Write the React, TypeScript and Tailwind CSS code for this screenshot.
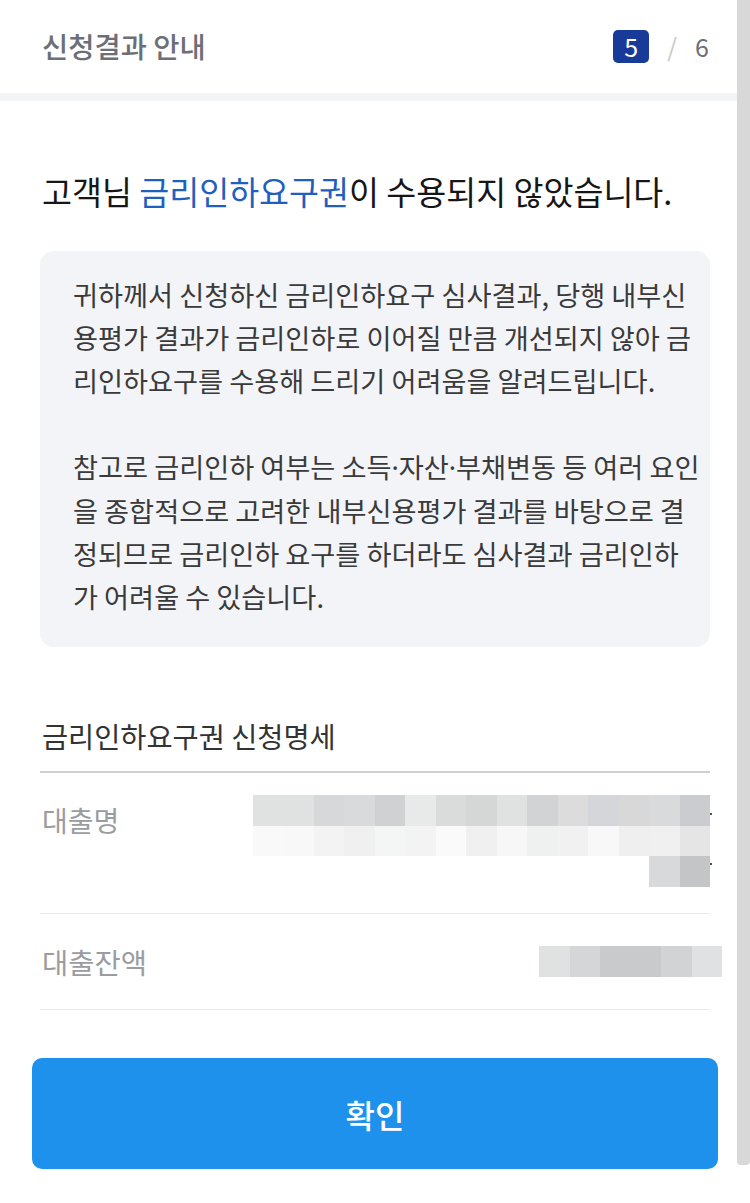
import React from 'react';

const FONT = { fontFamily: '"Noto Sans CJK KR", "Noto Sans", sans-serif' };
const LATIN = { fontFamily: '"Noto Sans", "Noto Sans CJK KR", sans-serif' };

// blurred (mosaic) values, one colour per 31px cell; null = empty cell
const loanNameCells: (string | null)[][] = [
  ['#e0e2e1', '#e0e2e1', '#d6d8da', '#d9dadc', '#d0d1d3', '#e8eae9', '#dadcdb', '#d5d7d6', '#e0e2e1', '#d2d3d5', '#dcdcdc', '#d5d6d9', '#d8d8d8', '#d9dadc', '#cbcccf'],
  ['#f9f9f9', '#f8f8f8', '#f3f3f3', '#f0f0f0', '#f4f6f5', '#f3f3f3', '#fafafa', '#f0f0f0', '#f7f7f7', '#eff1f0', '#f1f1f1', '#f8f8f8', '#efefef', '#f0f0f0', '#e5e5e5'],
  [null, null, null, null, null, null, null, null, null, null, null, null, null, '#d8d9db', '#c4c5c7'],
];

const balanceCells: (string | null)[][] = [
  ['#e0e2e1', '#d5d6d8', '#c9cacc', '#c9cacc', '#d2d3d5', '#e0e1e3'],
];

const Mosaic: React.FC<{ rows: (string | null)[][] }> = ({ rows }) => (
  <div className="flex flex-col">
    {rows.map((row, r) => (
      <div key={r} className="flex">
        {row.map((c, i) => (
          <div
            key={i}
            className="w-[30.5px] h-[30.7px]"
            style={{ backgroundColor: c ?? 'transparent' }}
          />
        ))}
      </div>
    ))}
  </div>
);

// middle dots set in a latin font so they stay narrow
const withDots = (line: string) =>
  line.split('·').map((part, i, arr) => (
    <React.Fragment key={i}>
      {part}
      {i < arr.length - 1 && <span style={LATIN}>·</span>}
    </React.Fragment>
  ));

const boxLines1 = [
  '귀하께서 신청하신 금리인하요구 심사결과, 당행 내부신',
  '용평가 결과가 금리인하로 이어질 만큼 개선되지 않아 금',
  '리인하요구를 수용해 드리기 어려움을 알려드립니다.',
];

const boxLines2 = [
  '참고로 금리인하 여부는 소득·자산·부채변동 등 여러 요인',
  '을 종합적으로 고려한 내부신용평가 결과를 바탕으로 결',
  '정되므로 금리인하 요구를 하더라도 심사결과 금리인하',
  '가 어려울 수 있습니다.',
];

export default function App() {
  return (
    <div className="w-[750px] min-h-[1203px] bg-white flex" style={FONT}>
      <div className="w-[737px] flex flex-col">
        {/* Header */}
        <div className="h-[93px] flex items-center justify-between pl-[42px] pr-[28px]">
          <h1 className="text-[28.5px] leading-none font-medium text-[#6c6f75]">신청결과 안내</h1>
          <div className="flex items-center">
            <span className="w-[36px] h-[33px] rounded-[5px] bg-[#183a98] text-white text-[25px] leading-none flex items-center justify-center">
              5
            </span>
            <span className="ml-[18px] text-[25px] leading-none text-[#c8c8c8]">/</span>
            <span className="ml-[18px] text-[25px] leading-none text-[#6c6f75]">6</span>
          </div>
        </div>
        <div className="h-[8px] bg-[#f3f4f8]" />

        <div className="pl-[40px] pr-[27px] flex flex-col">
          <h2 className="mt-[69px] text-[32.6px] leading-[41px] text-[#161616] pl-[2px] whitespace-nowrap">
            고객님 <span className="text-[#1f5fbf]">금리인하요구권</span>이 수용되지 않았습니다.
          </h2>

          <div className="mt-[40px] bg-[#f3f4f8] rounded-[14px] pl-[33px] pr-[10px] pt-[22px] pb-[29px] text-[27.2px] leading-[43px] text-[#3a3a3a]">
            {boxLines1.map((l) => (
              <div key={l} className="whitespace-nowrap">{withDots(l)}</div>
            ))}
            <div className="h-[43px]" />
            {boxLines2.map((l) => (
              <div key={l} className="whitespace-nowrap">{withDots(l)}</div>
            ))}
          </div>

          <div className="mt-[71px] pl-[2px] pb-[17px] text-[28.4px] leading-[36px] text-[#333333] border-b-2 border-[#cfcfcf]">
            금리인하요구권 신청명세
          </div>

          {/* Loan name row */}
          <div className="flex items-start justify-between pt-[22px] pb-[26px] border-b border-[#ececec]">
            <span className="pl-[2px] pt-[10px] text-[28px] leading-[31px] text-[#9a9ca0]">대출명</span>
            <div className="relative">
              <Mosaic rows={loanNameCells} />
              <span className="absolute right-[-2px] top-[18px] w-[2px] h-[2px] bg-[#555555]" />
              <span className="absolute right-[-2px] top-[68px] w-[2px] h-[2px] bg-[#555555]" />
            </div>
          </div>

          {/* Balance row */}
          <div className="h-[96px] flex items-center justify-between border-b border-[#ececec]">
            <span className="pl-[2px] text-[28.5px] leading-[31px] text-[#9a9ca0]">대출잔액</span>
            <div className="mr-[-12px]">
              <Mosaic rows={balanceCells} />
            </div>
          </div>

          <button className="mt-[48px] -ml-[8px] w-[686px] h-[111px] rounded-[10px] bg-[#1e91ec] text-white text-[32px] leading-none font-medium flex items-center justify-center">
            확인
          </button>
        </div>
      </div>

      {/* scrollbar */}
      <div className="w-[13px] h-[1165px] bg-[#d8d8d8] rounded-b-[4px]" />
    </div>
  );
}
